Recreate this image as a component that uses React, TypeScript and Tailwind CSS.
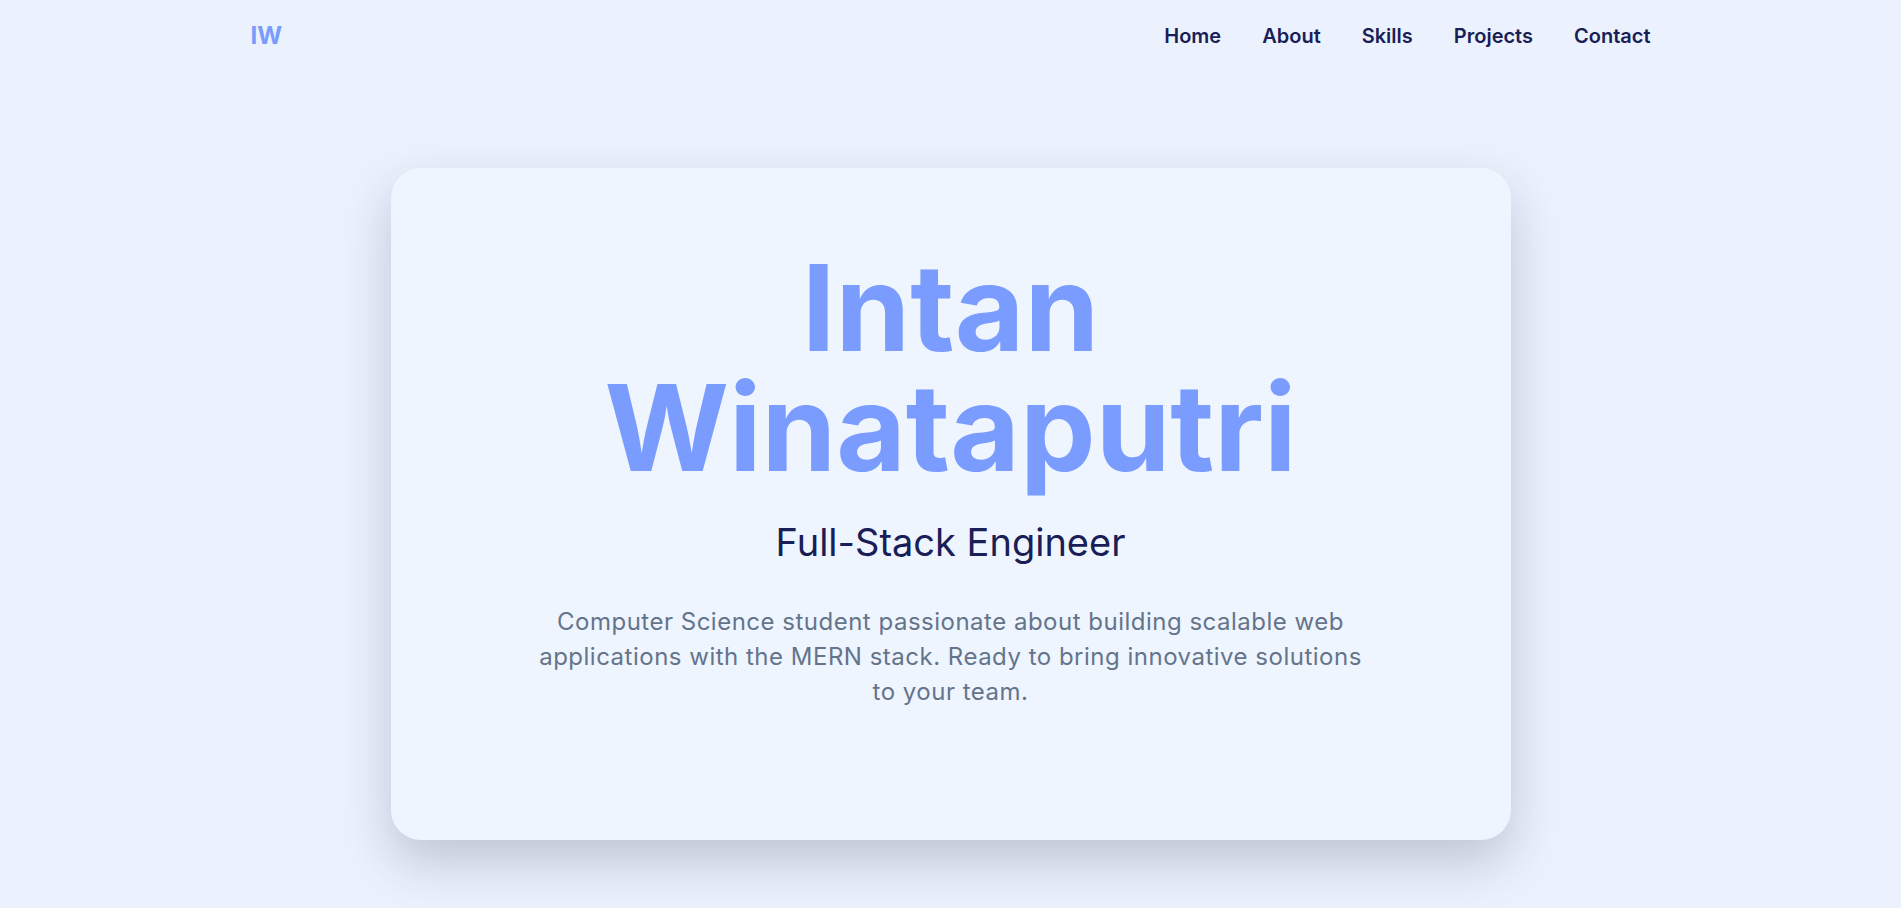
export default function App() {
  const links = ["Home", "About", "Skills", "Projects", "Contact"];
  return (
    <div className="min-h-screen w-full bg-[#ebf2fe] font-['Inter',sans-serif]">
      <nav className="mx-auto flex max-w-[1400px] items-center justify-between py-5">
        <a className="text-2xl font-bold text-[#7b9cff]" href="#">
          IW
        </a>
        <ul className="flex items-center gap-[41px]">
          {links.map((l) => (
            <li key={l}>
              <a className="text-xl font-semibold text-[#1a1e56]" href="#">
                {l}
              </a>
            </li>
          ))}
        </ul>
      </nav>

      <section className="flex justify-center pt-[96px]">
        <div className="flex w-[1120px] flex-col items-center rounded-[30px] bg-[#eff5ff] px-20 pt-20 pb-[131px] text-center shadow-[0_22px_50px_rgba(30,41,59,0.22)]">
          <h1 className="text-[120px] font-bold leading-none text-[#7b9cff]">
            Intan
            <br />
            Winataputri
          </h1>
          <h2 className="mt-[34px] text-[38px] font-normal leading-10 text-[#1a1e56]">
            Full-Stack Engineer
          </h2>
          <p className="mt-[42px] max-w-[840px] text-2xl leading-[35px] tracking-[0.5px] text-[#64748b]">
            Computer Science student passionate about building scalable web
            applications with the MERN stack. Ready to bring innovative
            solutions to your team.
          </p>
        </div>
      </section>
    </div>
  );
}
